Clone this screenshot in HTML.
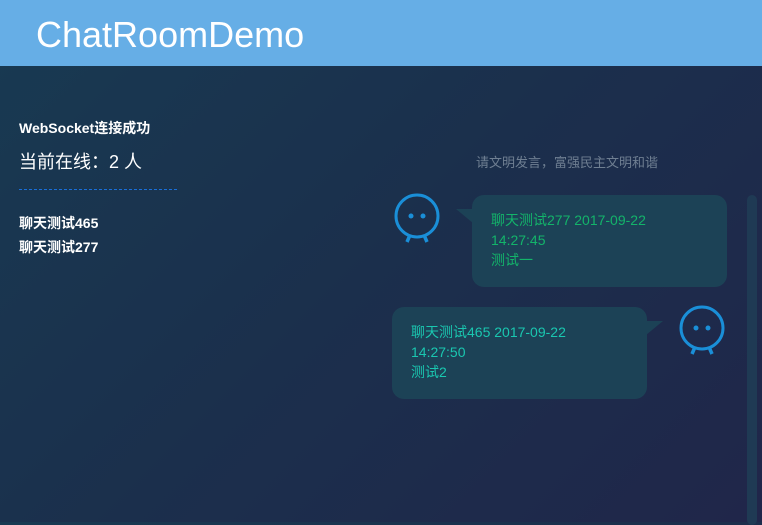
<!DOCTYPE html>
<html><head><meta charset="utf-8"><style>
*{margin:0;padding:0;box-sizing:border-box}
body{width:762px;height:522px;overflow:hidden;font-family:"Liberation Sans","Noto Sans CJK SC",sans-serif;background:linear-gradient(135deg,#183a52 0%,#1b2f4c 50%,#20264a 100%);position:relative}
.hd{position:absolute;left:0;top:0;width:762px;height:66px;background:#66aee6}
.hd span{position:absolute;left:36px;top:15px;font-size:36px;color:#fff;line-height:40px}
.a{position:absolute;color:#fff;white-space:nowrap}
.dash{position:absolute;left:19px;top:189px;width:160px;height:1px;background:repeating-linear-gradient(90deg,#1a6fd8 0 3px,transparent 3px 5px)}
.b{position:absolute;width:255px;height:92px;background:#1c4256;border-radius:12px;padding:15px 19px;font-size:14px;line-height:20px}
.sb{position:absolute;left:747px;top:195px;width:10px;height:330px;background:#1f3a54;border-radius:5px}
svg{position:absolute}
</style></head><body>
<div class="hd"><span>ChatRoomDemo</span></div>
<div class="a" style="left:19px;top:118px;font-size:14px;font-weight:bold">WebSocket连接成功</div>
<div class="a" style="left:19px;top:148px;font-size:18px">当前在线：2 人</div>
<div class="dash"></div>
<div class="a" style="left:19px;top:213px;font-size:14px;font-weight:bold">聊天测试465</div>
<div class="a" style="left:19px;top:237px;font-size:14px;font-weight:bold">聊天测试277</div>
<div class="a" style="left:476px;top:152px;font-size:13px;color:#6f7f92">请文明发言，富强民主文明和谐</div>

<svg style="left:392px;top:193px" width="52" height="52" viewBox="0 0 52 52"><circle cx="25" cy="23" r="21" fill="none" stroke="#1a8fd8" stroke-width="3"/><circle cx="19" cy="23" r="2.5" fill="#1a8fd8"/><circle cx="31" cy="23" r="2.5" fill="#1a8fd8"/><path d="M18 42l-3 7M32 42l3 7" stroke="#1a8fd8" stroke-width="3.5"/></svg>
<svg style="left:456px;top:209px" width="18" height="14"><path d="M0 0L17 0L17 14Z" fill="#1c4256"/></svg>
<div class="b" style="left:472px;top:195px;color:#13b46a">聊天测试277 2017-09-22<br>14:27:45<br>测试一</div>

<div class="b" style="left:392px;top:307px;color:#1ac7b0">聊天测试465 2017-09-22<br>14:27:50<br>测试2</div>
<svg style="left:646px;top:321px" width="18" height="14"><path d="M0 0L17 0L0 14Z" fill="#1c4256"/></svg>
<svg style="left:677px;top:305px" width="52" height="52" viewBox="0 0 52 52"><circle cx="25" cy="23" r="21" fill="none" stroke="#1a8fd8" stroke-width="3"/><circle cx="19" cy="23" r="2.5" fill="#1a8fd8"/><circle cx="31" cy="23" r="2.5" fill="#1a8fd8"/><path d="M18 42l-3 7M32 42l3 7" stroke="#1a8fd8" stroke-width="3.5"/></svg>
<div class="sb"></div>
</body></html>
